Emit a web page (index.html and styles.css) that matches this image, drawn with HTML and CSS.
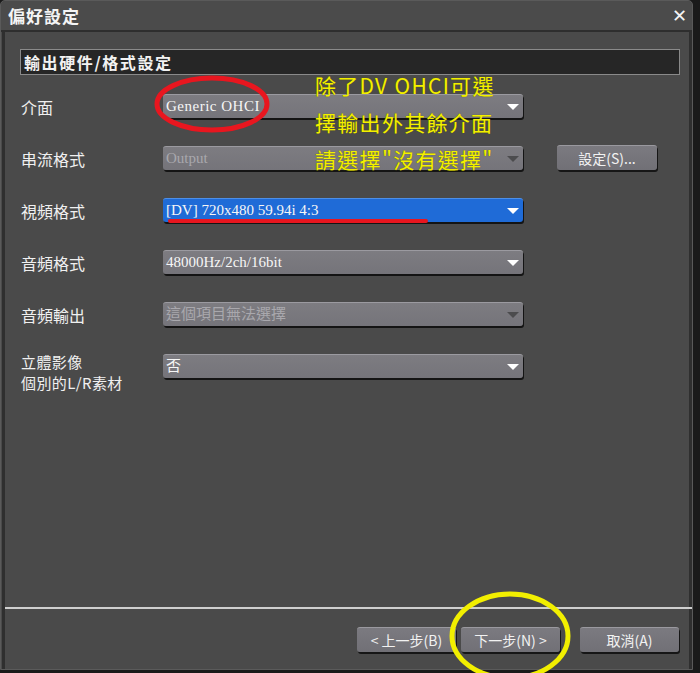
FILE: index.html
```html
<!DOCTYPE html>
<html lang="zh-Hant">
<head>
<meta charset="utf-8">
<title>偏好設定</title>
<link rel="stylesheet" href="styles.css">
</head>
<body>
<div class="window">
  <div class="titlebar">
    <span class="title">偏好設定</span>
    <span class="close">✕</span>
  </div>
  <div class="content">
    <div class="section">輸出硬件/格式設定</div>
    <div class="form">
      <div class="label">介面</div>
      <div class="field"><div class="select wide">Generic OHCI<span class="arrow"></span></div></div>

      <div class="label">串流格式</div>
      <div class="field"><div class="select disabled">Output<span class="arrow"></span></div><button class="btn setbtn">設定(S)...</button></div>

      <div class="label">視頻格式</div>
      <div class="field"><div class="select active">[DV] 720x480 59.94i 4:3<span class="arrow"></span></div></div>

      <div class="label">音頻格式</div>
      <div class="field"><div class="select">48000Hz/2ch/16bit<span class="arrow"></span></div></div>

      <div class="label">音頻輸出</div>
      <div class="field"><div class="select disabled">這個項目無法選擇<span class="arrow"></span></div></div>

      <div class="label two">立體影像<br>個別的L/R素材</div>
      <div class="field"><div class="select">否<span class="arrow"></span></div></div>
    </div>
    <div class="spacer"></div>
    <div class="footer">
      <button class="btn">&lt; 上一步(B)</button>
      <button class="btn">下一步(N) &gt;</button>
      <button class="btn cancel">取消(A)</button>
    </div>
  </div>
</div>

<div class="note">
  <div>除了DV OHCI可選</div>
  <div>擇輸出外其餘介面</div>
  <div>請選擇"沒有選擇"</div>
</div>

<svg class="marks" width="700" height="673" viewBox="0 0 700 673" xmlns="http://www.w3.org/2000/svg">
  <ellipse cx="212" cy="104" rx="55" ry="26" fill="none" stroke="#e8161f" stroke-width="5"/>
  <line x1="170" y1="221" x2="426" y2="221" stroke="#e8161f" stroke-width="4" stroke-linecap="round"/>
  <ellipse cx="510" cy="636" rx="58" ry="42" fill="none" stroke="#f2ef00" stroke-width="5"/>
</svg>
</body>
</html>
```

FILE: styles.css
```css
html, body {
  margin: 0;
  padding: 0;
}
body {
  width: 700px;
  height: 673px;
  background: #1a1a1a;
  position: relative;
  overflow: hidden;
  font-family: "Noto Sans CJK TC", "Noto Sans", sans-serif;
  color: #f2f2f2;
}
.window {
  width: 693px;
  height: 670px;
  background: #4a4a4a;
  border: 1px solid #5a5a5a;
  border-radius: 5px 5px 0 0;
  display: flex;
  flex-direction: column;
  box-sizing: border-box;
}
.titlebar {
  height: 29px;
  flex: none;
  background: #4b4b4b;
  border-bottom: 2px solid #2e2e2e;
  display: flex;
  align-items: center;
  justify-content: space-between;
  padding: 0 5px 0 7px;
  border-radius: 5px 5px 0 0;
}
.title {
  font-size: 17px;
  font-weight: bold;
  letter-spacing: 1px;
  color: #f4f4f4;
}
.close {
  font-size: 18px;
  font-weight: bold;
  color: #f4f4f4;
  font-family: "DejaVu Sans", sans-serif;
}
.content {
  flex: 1;
  display: flex;
  flex-direction: column;
  border-left: 3px solid #2f2f2f;
  border-right: 3px solid #2f2f2f;
  margin-left: 1px;
  padding: 17px 0 0 0;
}
.section {
  margin: 0 9px 0 15px;
  height: 24px;
  background: #262626;
  border: 1px solid #8a8a8a;
  font-size: 16px;
  font-weight: bold;
  line-height: 24px;
  padding-left: 3px;
  letter-spacing: 1.6px;
}
.form {
  display: grid;
  grid-template-columns: 142px 1fr;
  grid-auto-rows: 25px;
  row-gap: 27px;
  margin: 18px 0 0 16px;
}
.label {
  font-size: 16px;
  line-height: 25px;
  padding-top: 2px;
  color: #f0f0f0;
}
.label.two {
  padding-top: 0;
  font-size: 15px;
  line-height: 21px;
  margin-top: -2px;
  letter-spacing: 0.4px;
}
.field {
  display: flex;
  align-items: center;
  gap: 34px;
}
.select {
  position: relative;
  width: 360px;
  height: 24px;
  box-sizing: border-box;
  background: linear-gradient(#7d7c81, #75747a);
  border-top: 1px solid #9b9aa0;
  border-radius: 3px;
  box-shadow: 1px 2px 0 #141414;
  font-family: "Liberation Serif", "Noto Sans CJK TC", serif;
  font-size: 15px;
  line-height: 22px;
  padding-left: 3px;
  color: #f6f6f6;
  white-space: nowrap;
}
.select.wide {
  letter-spacing: 0.5px;
}
.select.disabled {
  color: #a9a8ad;
}
.select.active {
  background: #1f6bd7;
  border-top-color: #4d8fe8;
}
.arrow {
  position: absolute;
  right: 4px;
  top: 9px;
  width: 0;
  height: 0;
  border-left: 6px solid transparent;
  border-right: 6px solid transparent;
  border-top: 6px solid #ffffff;
}
.select.disabled .arrow {
  border-top-color: #4c4c4e;
}
.btn {
  height: 25px;
  box-sizing: border-box;
  background: linear-gradient(#7b7a80, #717076);
  border: none;
  border-top: 1px solid #9a999f;
  border-radius: 3px;
  box-shadow: 1px 2px 0 #161616;
  color: #f2f2f2;
  font-family: "Noto Sans CJK TC", sans-serif;
  font-size: 14px;
  padding: 0;
  width: 99px;
}
.setbtn {
  width: 100px;
}
.spacer {
  flex: 1;
}
.footer {
  border-top: 2px solid #cfcfcf;
  height: 62px;
  box-sizing: border-box;
  display: flex;
  justify-content: flex-end;
  align-items: flex-start;
  padding: 18px 13px 0 0;
  gap: 5px;
  margin-right: -3px;
}
.footer .cancel {
  margin-left: 15px;
}
.note {
  position: absolute;
  left: 315px;
  top: 67px;
  font-family: "Noto Sans CJK TC", sans-serif;
  font-size: 21px;
  letter-spacing: 1.3px;
  line-height: 37px;
  color: #f3f000;
  text-shadow: 0 0 1px #5a5a00;
}
.marks {
  position: absolute;
  left: 0;
  top: 0;
  pointer-events: none;
}
```
